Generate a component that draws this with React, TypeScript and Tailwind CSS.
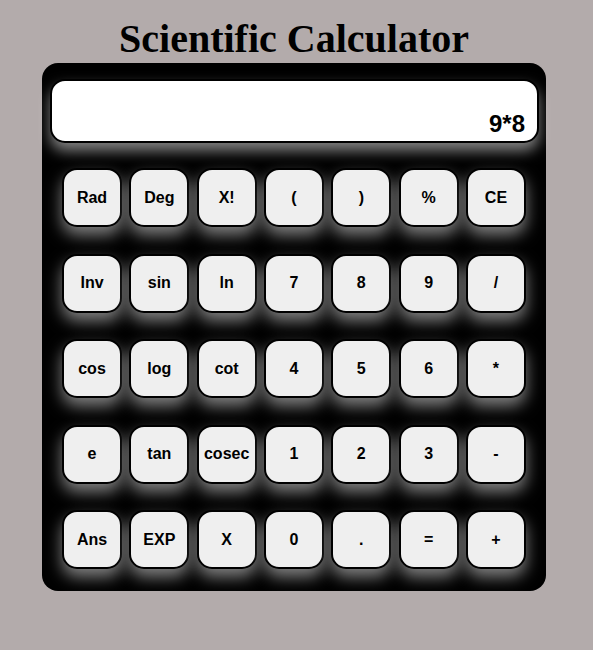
import React, { useState } from 'react';

const KEYS = [
  ['Rad', 'Deg', 'X!', '(', ')', '%', 'CE'],
  ['Inv', 'sin', 'ln', '7', '8', '9', '/'],
  ['cos', 'log', 'cot', '4', '5', '6', '*'],
  ['e', 'tan', 'cosec', '1', '2', '3', '-'],
  ['Ans', 'EXP', 'X', '0', '.', '=', '+'],
];

const App: React.FC = () => {
  const [display] = useState('9*8');

  return (
    <div className="min-h-[650px] w-full bg-[#b3abab] flex flex-col items-center pr-[5px]">
      <h1 className="mt-[16px] text-[40px] leading-[46px] font-bold text-black [font-family:'Liberation_Serif',serif]">
        Scientific Calculator
      </h1>
      <div className="mt-px w-[504px] h-[528px] rounded-[16px] bg-black pt-[16px] px-[8px] [font-family:'Liberation_Sans',Arial,sans-serif]">
        <div className="w-[489px] h-[64px] rounded-[15px] border-2 border-black bg-white flex items-end justify-end pr-[12px] pb-[5px] shadow-[0_8px_14px_rgba(255,255,255,0.5)]">
          <span className="text-[24px] font-bold text-black leading-none">{display}</span>
        </div>
        <div className="ml-[12px] mt-[25px] grid grid-cols-[repeat(7,60px)] gap-x-[7.33px] gap-y-[26.5px]">
          {KEYS.flat().map((k, i) => (
            <button
              key={i}
              className="h-[59px] rounded-[15px] border-2 border-black bg-[#efefef] text-[16px] font-bold text-black shadow-[0_8px_16px_rgba(255,255,255,0.5)]"
            >
              {k}
            </button>
          ))}
        </div>
      </div>
    </div>
  );
};

export default App;
